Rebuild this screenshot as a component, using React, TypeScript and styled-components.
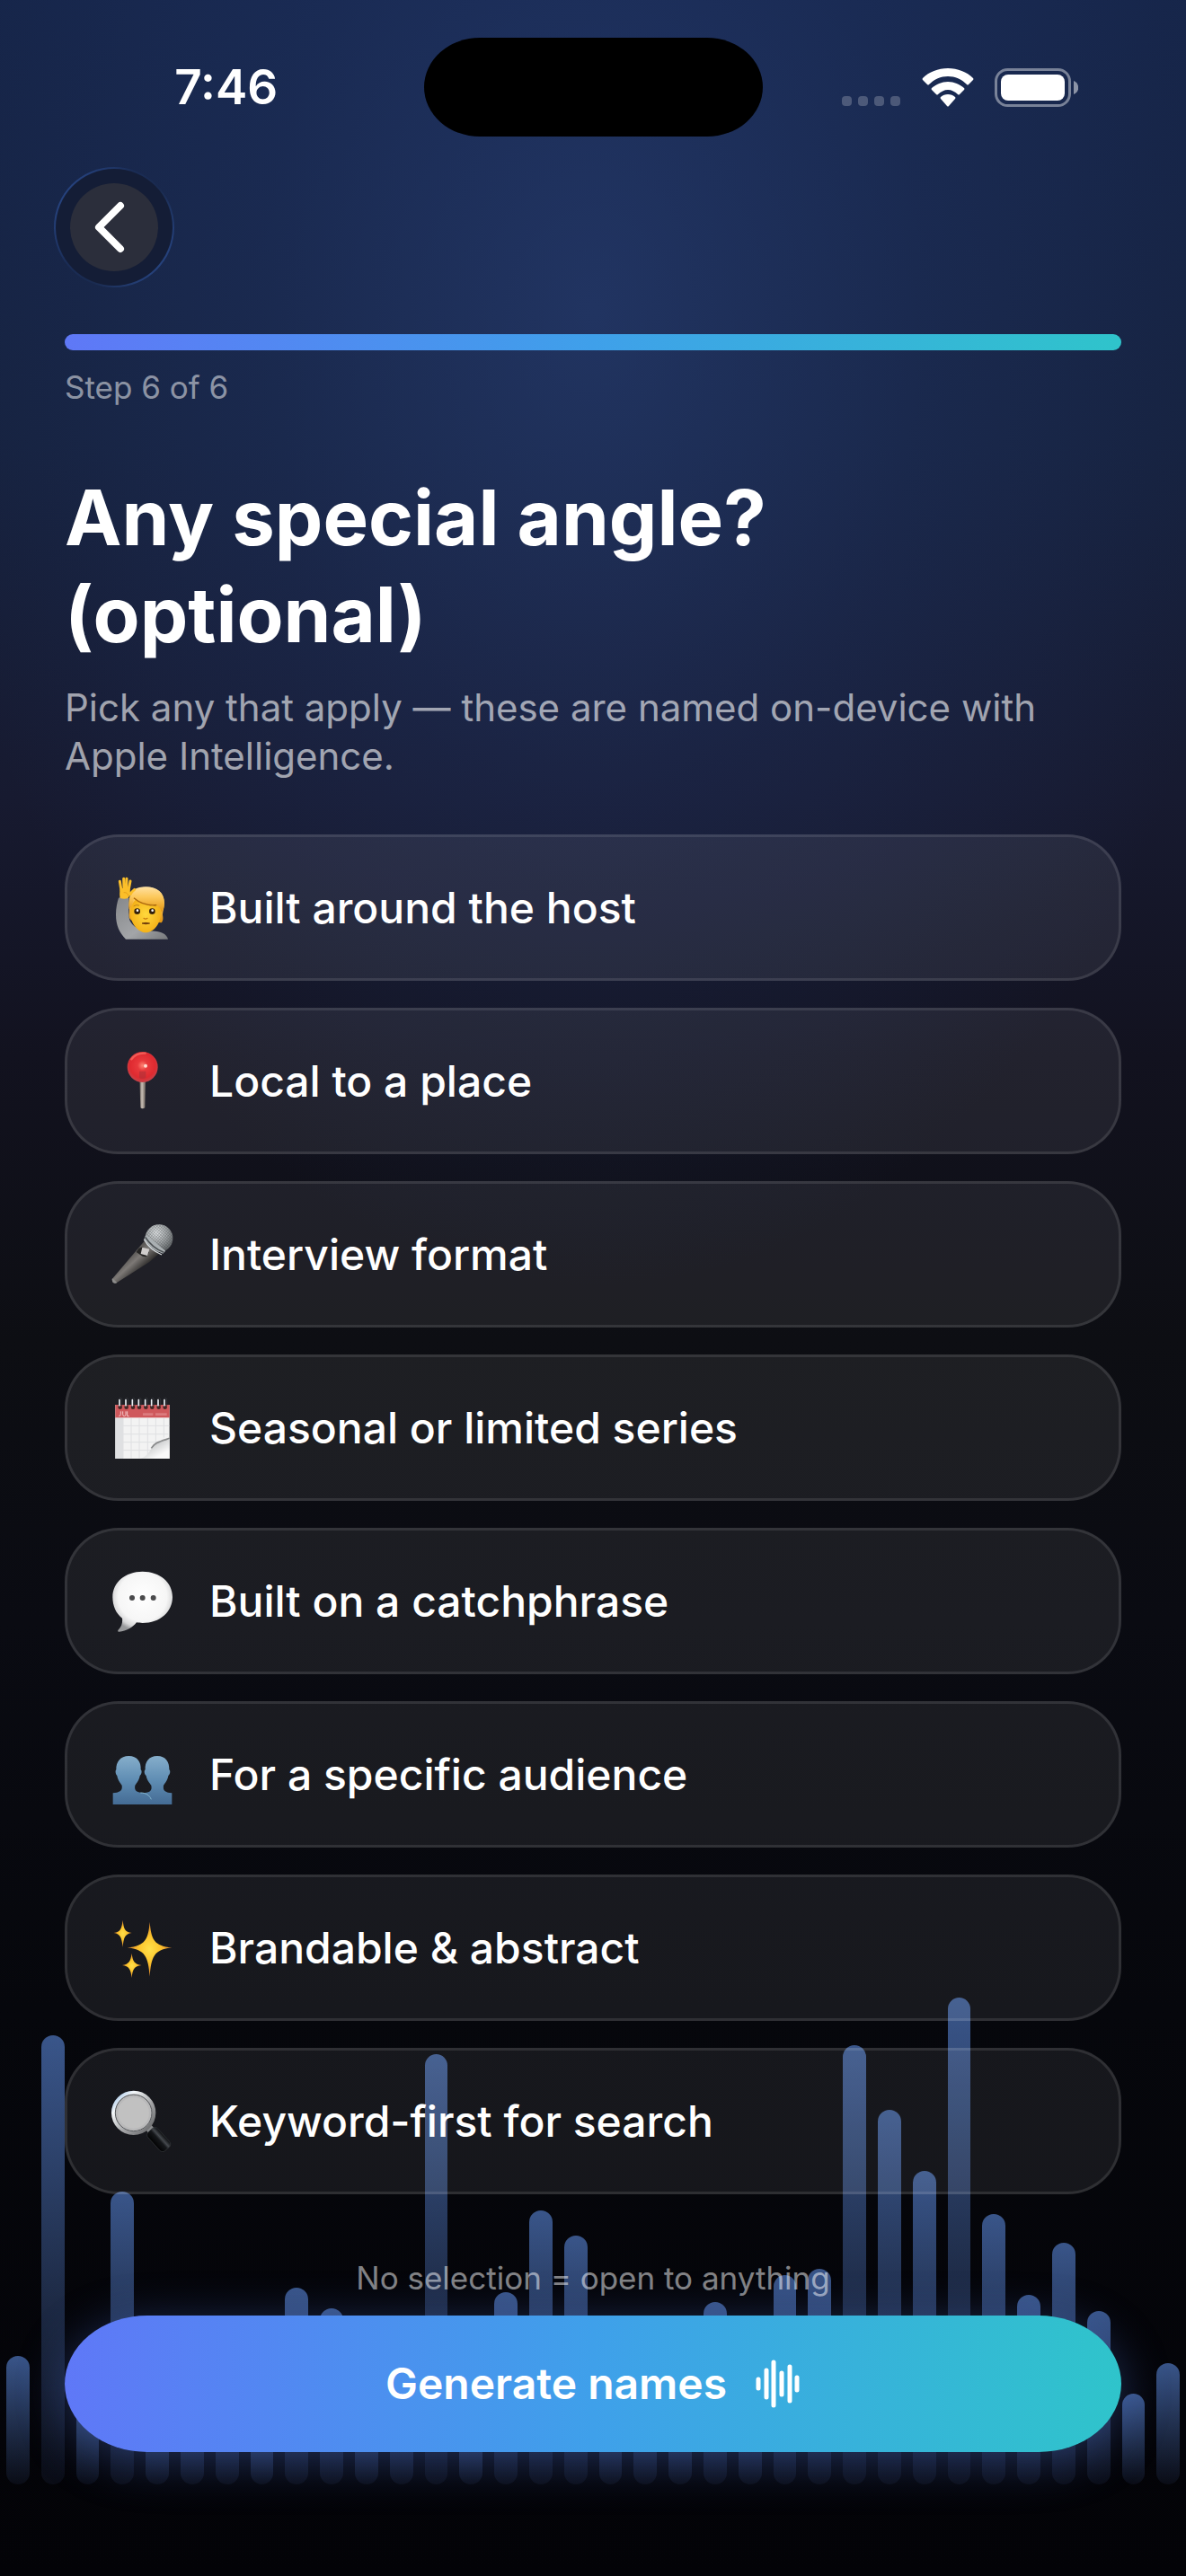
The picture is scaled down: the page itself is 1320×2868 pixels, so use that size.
import React, { useState } from "react";
import styled, { createGlobalStyle } from "styled-components";

const GlobalStyle = createGlobalStyle`
  *, *::before, *::after { box-sizing: border-box; }
  body {
    margin: 0;
    background: #030307;
    font-family: Inter, "Liberation Sans", sans-serif;
    -webkit-font-smoothing: antialiased;
  }
  button { font: inherit; color: inherit; cursor: pointer; }
  h1, p, ul { margin: 0; padding: 0; }
`;

const brandGradient = "linear-gradient(90deg, #5f78f7 0%, #3fa0ea 50%, #2fc4cb 100%)";

const Screen = styled.div`
  position: relative;
  isolation: isolate;
  display: flex;
  flex-direction: column;
  min-height: 100vh;
  color: #fff;
  background:
    radial-gradient(ellipse 56% 38% at 50% 12%, rgba(46, 72, 134, 0.46) 0%, rgba(38, 62, 120, 0.24) 50%, rgba(36, 50, 110, 0) 100%),
    linear-gradient(180deg, #162549 0%, #16223f 17%, #171a30 31%, #12121f 41%, #0d0e13 52%, #0a0b12 63%, #06070c 78%, #030307 100%);
`;

const Wave = styled.div`
  position: absolute;
  z-index: -1;
  left: 0;
  right: 0;
  bottom: 102px;
  display: flex;
  align-items: flex-end;
  gap: 13px;
  padding: 0 7px;
`;

const WaveBar = styled.span<{ $height: number }>`
  flex: 1;
  height: ${(p) => p.$height}px;
  border-radius: 13px;
  background: linear-gradient(180deg, rgba(92, 138, 222, 0.6), rgba(84, 112, 186, 0.08));
`;

const StatusBar = styled.header`
  display: grid;
  grid-template-columns: 1fr 377px 1fr;
  align-items: center;
  padding-top: 42px;
`;

const Time = styled.time`
  padding-left: 32px;
  text-align: center;
  font-size: 53px;
  line-height: 64px;
  font-weight: 600;
`;

const Island = styled.div`
  height: 110px;
  border-radius: 62px / 55px;
  background: #000;
`;

const Indicators = styled.div`
  display: flex;
  justify-content: center;
  align-items: flex-end;
  gap: 23px;
  padding-right: 32px;
`;

const Nav = styled.nav`
  display: flex;
  padding: 34px 60px 0;
`;

const BackButton = styled.button`
  display: grid;
  place-items: center;
  width: 134px;
  height: 134px;
  padding: 0;
  border: 2px solid transparent;
  border-radius: 50%;
  background:
    linear-gradient(#141d36, #141d36) padding-box,
    linear-gradient(125deg, #2a4a8c 5%, #1a2c55 40%, #1a2b50 60%, #2a4a8c 95%) border-box;
`;

const BackDisc = styled.span`
  display: grid;
  place-items: center;
  width: 98px;
  height: 98px;
  border-radius: 50%;
  background: #2b2e3b;
`;

const Content = styled.main`
  display: flex;
  flex: 1;
  flex-direction: column;
  padding: 52px 72px 138px;
`;

const Progress = styled.div`
  height: 18px;
  border-radius: 9px;
  background: ${brandGradient};
`;

const Caption = styled.p<{ $centered?: boolean }>`
  font-size: 35px;
  line-height: 44px;
  text-align: ${(p) => (p.$centered ? "center" : "left")};
  color: rgba(255, 255, 255, 0.52);
`;

const StepCaption = styled(Caption)`
  margin-top: 19px;
`;

const Title = styled.h1`
  max-width: 900px;
  margin-top: 70px;
  font-size: 85px;
  line-height: 108px;
  font-weight: 700;
`;

const Subtitle = styled.p`
  margin-top: 22px;
  font-size: 42px;
  line-height: 54px;
  color: rgba(255, 255, 255, 0.6);
`;

const Options = styled.ul`
  display: flex;
  flex-direction: column;
  gap: 30px;
  margin-top: 60px;
  list-style: none;
`;

const OptionButton = styled.button`
  display: flex;
  align-items: center;
  gap: 38px;
  width: 100%;
  min-height: 163px;
  padding: 0 48px;
  border: 3px solid rgba(255, 255, 255, 0.1);
  border-radius: 60px;
  background: rgba(255, 255, 255, 0.07);
  background-clip: border-box;
  text-align: left;
  font-size: 48px;
  line-height: 64px;
  font-weight: 500;

  &[aria-pressed="true"] {
    border-color: #3fa0ea;
  }
`;

const Footer = styled.footer`
  display: flex;
  flex-direction: column;
  gap: 20px;
  margin-top: auto;
  padding-top: 60px;
`;

const GenerateButton = styled.button`
  display: flex;
  align-items: center;
  justify-content: center;
  gap: 32px;
  width: 100%;
  height: 152px;
  border: 0;
  border-radius: 92px / 76px;
  background: ${brandGradient};
  box-shadow: 0 10px 54px rgba(84, 126, 230, 0.36);
  font-size: 48px;
  line-height: 64px;
  font-weight: 600;
`;

const waveHeights = [
  143, 500, 120, 326, 130, 150, 170, 100, 219, 196, 130, 160, 479, 110, 214, 305, 277,
  140, 170, 140, 203, 150, 233, 240, 489, 417, 349, 542, 301, 211, 269, 193, 101, 135,
];

const Emoji = ({ children }: { children: React.ReactNode }) => (
  <svg width="72" height="72" viewBox="0 0 216 216" aria-hidden="true">
    {children}
  </svg>
);

const HostIcon = () => (
  <Emoji>
    <defs>
      <linearGradient id="sleeve" x1="0" y1="0" x2="1" y2="1">
        <stop offset="0" stopColor="#85878a" />
        <stop offset="0.6" stopColor="#a3a5a8" />
        <stop offset="1" stopColor="#77797c" />
      </linearGradient>
      <radialGradient id="face" cx="0.5" cy="0.5" r="0.6">
        <stop offset="0" stopColor="#ffd83c" />
        <stop offset="1" stopColor="#f2aa12" />
      </radialGradient>
      <linearGradient id="hair" x1="0" y1="0" x2="0" y2="1">
        <stop offset="0" stopColor="#ffe0a0" />
        <stop offset="0.4" stopColor="#fcc85a" />
        <stop offset="1" stopColor="#e29411" />
      </linearGradient>
    </defs>
    <path d="M64 92C58 52 84 37 118 37c38 0 62 20 62 54 0 18-6 28-6 40 2 10 2 20-4 26l-100-8c-8-6-10-14-8-24z" fill="url(#hair)" />
    <path d="M27 74q17-6 35 1c-1 28-4 58 3 76 10 20 30 28 50 36 40-8 73 4 77 25H51c-22-22-33-48-33-82 0-22 4-40 9-56z" fill="url(#sleeve)" />
    <path d="M66 122c0-30 20-54 52-54s50 24 50 56c0 36-24 66-50 66s-52-30-52-68z" fill="url(#face)" />
    <path d="M62 112c-6-46 16-74 56-74 40 0 64 22 61 60-1 12-5 18-9 24-2-12-8-20-16-24-32 4-58-4-76-24-2 18-8 30-16 38z" fill="url(#hair)" />
    <path d="M78 74c20 18 44 26 76 24" fill="none" stroke="#a9660c" strokeWidth="4" />
    <g fill="none" stroke="#fbbf2a" strokeWidth="9" strokeLinecap="round">
      <path d="M31 19l5 30M44 10l1 36M54 10l-1 36M66 18l-6 32M80 46q-8 6-14 16" />
    </g>
    <path d="M32 44q16-5 32 0c1 8 2 14 4 16-4 8-8 12-10 15q-12 5-26 0c-2-8-2-20 0-31z" fill="#fbbf2a" />
    <path d="M44 56q12-2 16 12" stroke="#d99110" strokeWidth="2" fill="none" />
    <circle cx="89" cy="119" r="10" fill="#33200c" />
    <circle cx="139" cy="119" r="10" fill="#33200c" />
    <circle cx="90" cy="116" r="4" fill="#fff" />
    <circle cx="140" cy="116" r="4" fill="#fff" />
    <path d="M78 101q8-6 17-2M132 99q10-4 18 2" fill="none" stroke="#c08019" strokeWidth="3" strokeLinecap="round" />
    <path d="M111 142q6 5 12 0" fill="none" stroke="#c97d10" strokeWidth="4" strokeLinecap="round" />
    <path d="M105 159q12-4 26 0-13 5-26 0z" fill="#5c2a08" stroke="#5c2a08" strokeWidth="2" />
  </Emoji>
);

const PinIcon = () => (
  <Emoji>
    <defs>
      <radialGradient id="pinBall" cx="0.5" cy="0.45" r="0.55">
        <stop offset="0" stopColor="#ff8272" />
        <stop offset="0.3" stopColor="#e8393c" />
        <stop offset="0.75" stopColor="#df2a30" />
        <stop offset="1" stopColor="#c4434a" />
      </radialGradient>
      <linearGradient id="needle" x1="0" y1="0" x2="1" y2="0">
        <stop offset="0" stopColor="#5d554f" />
        <stop offset="0.4" stopColor="#c9bfb6" />
        <stop offset="1" stopColor="#6b625b" />
      </linearGradient>
    </defs>
    <path d="M97 104h20l-2 92q-8 6-15 0z" fill="url(#needle)" />
    <circle cx="107" cy="60" r="51" fill="url(#pinBall)" />
    <path d="M96 74h22v22q-11 6-22 0z" fill="#a83238" opacity="0.55" />
    <path d="M70 34q16-22 46-20" fill="none" stroke="#ff7d70" strokeWidth="7" strokeLinecap="round" opacity="0.6" />
    <circle cx="117" cy="56" r="6" fill="#ffd9cf" />
  </Emoji>
);

const MicIcon = () => (
  <Emoji>
    <defs>
      <linearGradient id="micBody" x1="0.3" y1="0.3" x2="0.7" y2="0.7">
        <stop offset="0" stopColor="#43413f" />
        <stop offset="0.45" stopColor="#7d7976" />
        <stop offset="1" stopColor="#1c1b1a" />
      </linearGradient>
      <radialGradient id="micHead" cx="0.4" cy="0.3" r="0.75">
        <stop offset="0" stopColor="#e6e9eb" />
        <stop offset="0.55" stopColor="#9fa3a5" />
        <stop offset="1" stopColor="#5a5e60" />
      </radialGradient>
      <pattern id="mesh" width="7" height="7" patternUnits="userSpaceOnUse" patternTransform="rotate(40)">
        <path d="M0 0h7M0 0v7" stroke="#33383a" strokeWidth="2" />
      </pattern>
    </defs>
    <path d="M113 62l47 44-30 26L20 202q-8 4-13-3-4-6 1-13z" fill="url(#micBody)" />
    <path d="M6 186q-4 8 2 14 7 6 14 1z" fill="#8d8c8b" />
    <circle cx="162" cy="53" r="46" fill="url(#micHead)" />
    <circle cx="162" cy="53" r="46" fill="url(#mesh)" opacity="0.65" />
    <path d="M118 42l66 53-9 9q-38-11-63-49z" fill="#aab0b3" />
    <path d="M116 49q22 35 62 51" fill="none" stroke="#4b4f52" strokeWidth="5" />
    <path d="M112 57q20 35 59 51" fill="none" stroke="#d9dddf" strokeWidth="4" />
    <path d="M95 86l12-4 22 18-10 15-12-2-21-14z" fill="#252423" />
    <path d="M106 83l24 6-7 22-22-6z" fill="#cfcccb" />
  </Emoji>
);

const CalendarIcon = () => (
  <Emoji>
    <defs>
      <linearGradient id="curl" x1="0.3" y1="0.2" x2="0.75" y2="0.8">
        <stop offset="0" stopColor="#77797b" />
        <stop offset="0.4" stopColor="#d5d6d7" />
        <stop offset="1" stopColor="#fafafa" />
      </linearGradient>
    </defs>
    <rect x="16" y="30" width="181" height="180" fill="#f3f3f3" />
    <path d="M16 73h26v137H16z" fill="#dfe0e2" />
    <path d="M42 75v134M69 75v134M96 75v134M124 75v120M151 75v92M178 75v65M18 100h178M18 128h175M18 155h145M18 182h120" stroke="#dfe0e2" strokeWidth="3" />
    <path d="M197 138c-10 16-46 14-58 34-9 18-22 34-40 38h98z" fill="url(#curl)" />
    <path d="M197 142c-30 10-50 14-61 33" fill="none" stroke="#58595b" strokeWidth="5" opacity="0.65" />
    <rect x="16" y="30" width="181" height="43" fill="#cf585c" />
    <path d="M34 52v10q0 6-6 5M41 52v10q0 6 5 6t5-6V52M56 52v16h6" fill="none" stroke="#f3c6c8" strokeWidth="3" />
    <path d="M108 62h34M150 62h38" stroke="#dc7b7e" strokeWidth="8" />
    {[31, 52, 74, 95, 117, 138, 160, 181].map((x) => (
      <g key={x}>
        <circle cx={x + 1} cy="38" r="7" fill="#432726" />
        <path d={`M${x - 2} 37V15q0-8 5-8 4 0 4 8v17`} fill="none" stroke="#2f3136" strokeWidth="3" />
        <path d={`M${x - 1} 32V14`} stroke="#e9eef3" strokeWidth="5" strokeLinecap="round" />
      </g>
    ))}
  </Emoji>
);

const BubbleIcon = () => (
  <Emoji>
    <defs>
      <radialGradient id="bubble" cx="0.5" cy="0.42" r="0.58">
        <stop offset="0" stopColor="#fff" />
        <stop offset="0.7" stopColor="#f6f6f6" />
        <stop offset="0.88" stopColor="#d7d7d8" />
        <stop offset="1" stopColor="#98999b" />
      </radialGradient>
    </defs>
    <path
      d="M107 8c58 0 100 36 100 85 0 50-42 87-100 87-8 0-14-1-20-2-12 16-34 30-58 31-5 0-6-4-2-7 10-10 14-24 12-38C18 148 7 122 7 93 7 44 49 8 107 8z"
      fill="url(#bubble)"
    />
    {[72, 107, 143].map((x) => (
      <circle key={x} cx={x} cy="96" r="9" fill="#4a4a4c" />
    ))}
  </Emoji>
);

const AudienceIcon = () => (
  <Emoji>
    <defs>
      <linearGradient id="bust" gradientUnits="userSpaceOnUse" x1="0" y1="45" x2="0" y2="207">
        <stop offset="0" stopColor="#86aecb" />
        <stop offset="0.5" stopColor="#5f8db3" />
        <stop offset="1" stopColor="#446b94" />
      </linearGradient>
    </defs>
    <path
      d="M61 45c28 0 42 20 40 46 5 3 3 16-3 20-3 16-10 24-16 32-4 20 8 24 28 25 20-1 30-6 26-25-6-8-14-16-17-32-6-4-8-17-3-20-2-26 12-46 40-46s41 20 40 46c5 3 3 16-3 20-3 16-10 24-16 32-3 21 8 23 28 26v38H8v-38c20-3 33-5 30-26-6-8-13-16-16-32-5-4-7-17-3-20-1-26 14-46 42-46z"
      fill="url(#bust)"
    />
    <path d="M100 168c18 0 30 8 36 22" fill="none" stroke="#83b6cf" strokeWidth="3" />
  </Emoji>
);

const SparklesIcon = () => (
  <Emoji>
    <defs>
      <radialGradient id="spark">
        <stop offset="0" stopColor="#ffe04a" />
        <stop offset="0.45" stopColor="#fdc62e" />
        <stop offset="1" stopColor="#d9822b" />
      </radialGradient>
    </defs>
    <path d="M131 20c5 58 13 80 74 86-61 7-69 32-74 97-5-65-14-90-75-97 61-6 70-28 75-86z" fill="url(#spark)" />
    <path d="M41 14c3 30 7 40 30 43-23 4-27 14-30 48-4-34-8-44-30-48 22-3 26-13 30-43z" fill="url(#spark)" />
    <path d="M71 125c3 26 8 36 33 40-25 3-30 12-33 42-4-30-9-39-32-42 23-4 28-14 32-40z" fill="url(#spark)" />
  </Emoji>
);

const MagnifierIcon = () => (
  <Emoji>
    <defs>
      <linearGradient id="rim" x1="0" y1="0" x2="1" y2="1">
        <stop offset="0" stopColor="#8fb9e4" />
        <stop offset="0.25" stopColor="#f4f7f9" />
        <stop offset="0.6" stopColor="#a3a4a6" />
        <stop offset="1" stopColor="#5e5f61" />
      </linearGradient>
      <linearGradient id="handle" x1="0" y1="0" x2="0" y2="1">
        <stop offset="0" stopColor="#0b0c0e" />
        <stop offset="0.3" stopColor="#45494e" />
        <stop offset="0.5" stopColor="#15171a" />
        <stop offset="1" stopColor="#030304" />
      </linearGradient>
    </defs>
    <path d="M118 134l18-15 14 16-20 18z" fill="#898b8d" />
    <rect x="0" y="-22" width="84" height="44" rx="13" fill="url(#handle)" stroke="#33363a" strokeWidth="2" transform="translate(133 137) rotate(48)" />
    <circle cx="77" cy="79" r="68" fill="#b9b9ba" stroke="url(#rim)" strokeWidth="12" />
    <circle cx="77" cy="79" r="61" fill="none" stroke="#55575a" strokeWidth="3" />
    <circle cx="77" cy="79" r="52" fill="#c1c1c1" />
  </Emoji>
);

const options = [
  { label: "Built around the host", Icon: HostIcon },
  { label: "Local to a place", Icon: PinIcon },
  { label: "Interview format", Icon: MicIcon },
  { label: "Seasonal or limited series", Icon: CalendarIcon },
  { label: "Built on a catchphrase", Icon: BubbleIcon },
  { label: "For a specific audience", Icon: AudienceIcon },
  { label: "Brandable & abstract", Icon: SparklesIcon },
  { label: "Keyword-first for search", Icon: MagnifierIcon },
];

const CellularIcon = () => (
  <svg width="66" height="12" viewBox="0 0 66 12" fill="#fff" fillOpacity="0.22" aria-hidden="true">
    {[0, 18, 36, 54].map((x) => (
      <rect key={x} x={x} y="0" width="11" height="11" rx="4" />
    ))}
  </svg>
);

const WifiIcon = () => (
  <svg width="58" height="43" viewBox="0 0 58 43" fill="#fff" aria-hidden="true">
    <path d="M29 0c11 0 21 4 28 11q1 1 0 2l-5 5q-1 1-2 0C44 12 37 9 29 9S14 12 8 18q-1 1-2 0l-5-5q-1-1 0-2C8 4 18 0 29 0z" />
    <path d="M29 15c7 0 13 3 18 7q1 1 0 2l-5 5q-1 1-2 0c-3-3-7-5-11-5s-8 2-11 5q-1 1-2 0l-5-5q-1-1 0-2c5-4 11-7 18-7z" />
    <path d="M29 29c3 0 6 1 8 3q1 1 0 2l-7 8q-1 1-2 0l-7-8q-1-1 0-2c2-2 5-3 8-3z" />
  </svg>
);

const BatteryIcon = () => (
  <svg width="93" height="43" viewBox="0 0 93 43" aria-hidden="true">
    <rect x="1.5" y="1.5" width="82" height="40" rx="13" fill="none" stroke="#fff" strokeOpacity="0.42" strokeWidth="3" />
    <rect x="7" y="7" width="71" height="29" rx="8" fill="#fff" />
    <path d="M88 14c7 3 7 12 0 15z" fill="#fff" fillOpacity="0.5" />
  </svg>
);

const ChevronIcon = () => (
  <svg width="52" height="58" viewBox="0 0 52 58" aria-hidden="true">
    <path d="M33 5 9 29l24 24" fill="none" stroke="#fff" strokeWidth="8" strokeLinecap="round" strokeLinejoin="round" />
  </svg>
);

const WaveformIcon = () => (
  <svg width="50" height="54" viewBox="0 0 50 54" aria-hidden="true">
    <path
      d="M3 22v10M12 12v30M20 3v48M29 15v24M38 8v38M46 20v14"
      stroke="#fff"
      strokeWidth="5"
      strokeLinecap="round"
    />
  </svg>
);

export default function App() {
  const [selected, setSelected] = useState<string[]>([]);

  const toggle = (label: string) =>
    setSelected((current) =>
      current.includes(label) ? current.filter((item) => item !== label) : [...current, label]
    );

  return (
    <>
      <GlobalStyle />
      <Screen>
        <Wave aria-hidden="true">
          {waveHeights.map((height, index) => (
            <WaveBar key={index} $height={height} />
          ))}
        </Wave>

        <StatusBar>
          <Time>7:46</Time>
          <Island />
          <Indicators>
            <CellularIcon />
            <WifiIcon />
            <BatteryIcon />
          </Indicators>
        </StatusBar>

        <Nav>
          <BackButton type="button" aria-label="Back">
            <BackDisc>
              <ChevronIcon />
            </BackDisc>
          </BackButton>
        </Nav>

        <Content>
          <Progress role="progressbar" aria-label="Step" aria-valuemin={0} aria-valuemax={6} aria-valuenow={6} />
          <StepCaption>Step 6 of 6</StepCaption>
          <Title>Any special angle? (optional)</Title>
          <Subtitle>
            Pick any that apply — these are named on-device with Apple Intelligence.
          </Subtitle>

          <Options>
            {options.map(({ label, Icon }) => (
              <li key={label}>
                <OptionButton type="button" aria-pressed={selected.includes(label)} onClick={() => toggle(label)}>
                  <Icon />
                  {label}
                </OptionButton>
              </li>
            ))}
          </Options>

          <Footer>
            <Caption $centered>No selection = open to anything</Caption>
            <GenerateButton type="button">
              Generate names
              <WaveformIcon />
            </GenerateButton>
          </Footer>
        </Content>
      </Screen>
    </>
  );
}
